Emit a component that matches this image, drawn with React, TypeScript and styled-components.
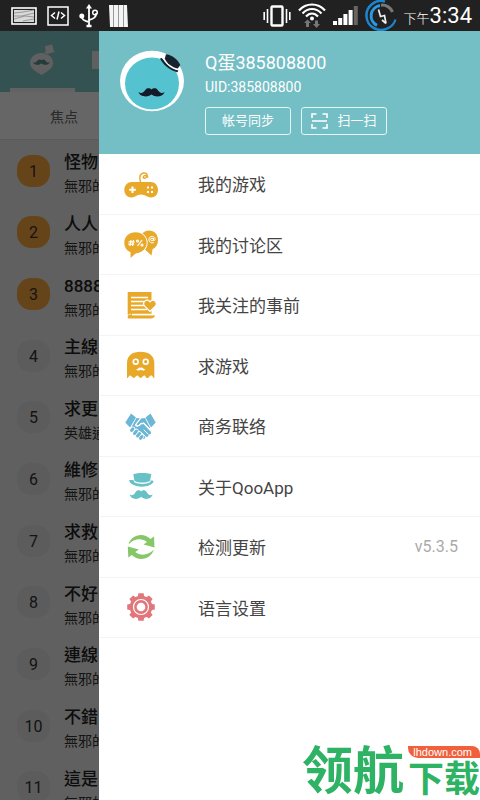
import React from "react";
import styled, { createGlobalStyle } from "styled-components";

const GlobalStyle = createGlobalStyle`
  *, *::before, *::after { box-sizing: border-box; }
  body { margin: 0; background: #fff; }
  button { font: inherit; color: inherit; margin: 0; padding: 0; border: 0; background: none; cursor: pointer; }
  a { color: inherit; text-decoration: none; }
  ul, ol { list-style: none; margin: 0; padding: 0; }
  h1, h2, p { margin: 0; font-weight: 400; }
  svg { display: block; flex: none; }
`;

const Screen = styled.div`
  display: grid;
  grid-template-rows: auto 1fr;
  height: 100vh;
  overflow: hidden;
  font-family: Roboto, "Noto Sans CJK SC", sans-serif;
`;

const StatusBar = styled.header`
  display: flex;
  align-items: center;
  justify-content: space-between;
  height: 31px;
  padding: 0 8px 0 11px;
  background: #212121;
  color: #fff;
`;

const StatusGroup = styled.div<{ $gap: number }>`
  display: flex;
  align-items: center;
  gap: ${(p) => p.$gap}px;
`;

const Clock = styled.time`
  display: flex;
  align-items: baseline;
  padding-top: 4px;
  font-size: 22px;
  line-height: 30px;
`;

const ClockPeriod = styled.span`
  font-size: 13px;
  font-weight: 300;
`;

const Stage = styled.div`
  position: relative;
  min-height: 0;
  overflow: hidden;
`;

const Page = styled.main`
  background: #f0f0f0;
  font-family: Roboto, "Noto Sans CJK TC", sans-serif;
`;

const TabBar = styled.nav`
  display: flex;
  height: 61px;
  padding-left: 10px;
  gap: 16px;
  background: #84cdcf;
`;

const Tab = styled.button<{ $active?: boolean }>`
  display: flex;
  align-items: center;
  justify-content: center;
  width: 65px;
  border-bottom: 4px solid ${(p) => (p.$active ? "#f4f4f4" : "transparent")};
`;

const SubTabs = styled.nav`
  display: flex;
  height: 48px;
  padding-left: 50px;
  border-bottom: 1px solid #e2e2e2;
  background: #fff;
  color: #666;
  font-family: "Noto Sans CJK SC", sans-serif;
  font-size: 14px;
`;

const PostList = styled.ol`
  display: grid;
  grid-auto-rows: 1fr;
  height: 678px;
`;

const Post = styled.li`
  display: flex;
  align-items: center;
  gap: 14px;
  padding-left: 17px;
  overflow: hidden;
  white-space: nowrap;
`;

const Rank = styled.span<{ $top: boolean }>`
  flex: none;
  width: 33px;
  height: 32px;
  border-radius: 14px;
  background: ${(p) => (p.$top ? "#ffab40" : "#e6e6e6")};
  color: #333;
  font-size: 16px;
  line-height: 33px;
  text-align: center;
`;

const PostText = styled.div`
  padding-top: 5px;
`;

const PostTitle = styled.h2`
  color: #222;
  font-size: 17px;
  font-weight: 500;
  line-height: 26px;
`;

const PostAuthor = styled.p`
  color: #333;
  font-size: 14px;
  line-height: 22px;
`;

const Scrim = styled.div`
  position: absolute;
  inset: 0;
  background: rgba(0, 0, 0, 0.6);
`;

const Drawer = styled.aside`
  position: absolute;
  inset: 0 0 0 99px;
  background: #fff;
`;

const Profile = styled.section`
  display: flex;
  gap: 21px;
  height: 123px;
  padding: 19px 20px 0 21px;
  background: #74bec5;
  color: #fff;
`;

const UserName = styled.h1`
  font-size: 18px;
  line-height: 26px;
`;

const UserId = styled.p`
  font-size: 14px;
  line-height: 22px;
`;

const ProfileActions = styled.div`
  display: flex;
  gap: 10px;
  margin-top: 9px;
`;

const OutlineButton = styled.button`
  display: flex;
  align-items: center;
  justify-content: center;
  gap: 9px;
  width: 86px;
  height: 28px;
  border: 1px solid #e4f5f6;
  border-radius: 3px;
  font-size: 13px;
  line-height: 26px;
`;

const Menu = styled.ul`
  display: grid;
  grid-auto-rows: 1fr;
  height: 484px;
`;

const MenuRow = styled.li`
  border-bottom: 1px solid #f4f4f4;
`;

const MenuLink = styled.a`
  display: flex;
  align-items: center;
  height: 100%;
  padding: 0 22px 0 24px;
  color: #444;
  font-size: 17px;
`;

const MenuLabel = styled.span`
  flex: 1;
  margin-left: 39px;
`;

const Version = styled.span`
  color: #aaa;
  font-size: 16px;
`;

const Watermark = styled.div`
  position: absolute;
  right: 0;
  bottom: 0;
  display: flex;
  align-items: flex-start;
  gap: 4px;
  height: 60px;
  color: #2eb263;
  font-family: "Noto Sans CJK SC", sans-serif;
  font-weight: 700;
`;

const MarkLarge = styled.span`
  font-size: 51px;
  line-height: 54px;
`;

const MarkSide = styled.div`
  display: flex;
  flex-direction: column;
  padding-top: 6px;
`;

const MarkTag = styled.span`
  height: 12px;
  padding-right: 8px;
  border-radius: 0 8px 0 10px;
  background: #f0603c;
  color: #fff;
  font-family: "Liberation Sans", sans-serif;
  font-size: 11px;
  font-weight: 400;
  line-height: 12px;
  text-align: right;
`;

const MarkSmall = styled.span`
  font-size: 36px;
  line-height: 36px;
`;

const MUSTACHE =
  "M13 2C11.5 .3 8.5 .2 7 2.2C5.2 4.8 3 6.5 0 4.5C1 9 8.5 10.5 13 7C17.5 10.5 25 9 26 4.5C23 6.5 20.8 4.8 19 2.2C17.5 .2 14.5 .3 13 2Z";

const PictureIcon = () => (
  <svg width="26" height="18" viewBox="0 0 26 18">
    <rect x="1" y="1" width="24" height="16" fill="#212121" stroke="#fff" strokeWidth="1.6" />
    <path d="M3 3H23V15H3Z" fill="#d8d8d8" />
    <path d="M3 6L12 5L23 3M3 9L11 9L23 6M3 12L14 9L23 10M12 14L23 12" stroke="#888" fill="none" strokeWidth=".8" />
  </svg>
);

const CodeIcon = () => (
  <svg width="22" height="20" viewBox="0 0 22 20" fill="none" stroke="#fff">
    <rect x="1" y="1" width="20" height="18" strokeWidth="1.5" />
    <path d="M8 6.5L4.5 9.5L8 12.5M14 6.5L17.5 9.5L14 12.5M12 5.5L10 13.5" strokeWidth="1.5" />
  </svg>
);

const UsbIcon = () => (
  <svg width="20" height="24" viewBox="0 0 20 24" fill="none" stroke="#fff" strokeWidth="1.8">
    <path d="M10 4V22M10 18C5 17 2.5 15.500 2.500 12M10 16C14.500 15 17.500 12.500 17 9" />
    <path d="M10 0L13 4.500H7Z" fill="#fff" stroke="none" />
    <circle cx="2.800" cy="12" r="2.500" fill="#fff" stroke="none" />
    <circle cx="16" cy="8.500" r="2.300" strokeWidth="1.500" />
    <path d="M7.500 22H12.500" strokeWidth="2.500" />
  </svg>
);

const BarsIcon = () => (
  <svg width="19" height="22" viewBox="0 0 19 22">
    <path d="M0 0H18L19 22H1Z" fill="#f5f5f5" />
    <path d="M4.500 0V22M9.500 0V22M14.500 0V22" stroke="#999" strokeWidth="1" />
  </svg>
);

const VibrateIcon = () => (
  <svg width="28" height="22" viewBox="0 0 28 22" fill="none" stroke="#fff">
    <rect x="8.500" y="1.500" width="11" height="19" rx="1" strokeWidth="2.400" />
    <path d="M4.500 4V18M23.500 4V18M1.200 7V15M26.800 7V15" strokeWidth="1.600" />
  </svg>
);

const WifiIcon = () => (
  <svg width="28" height="26" viewBox="0 0 28 26" fill="none">
    <path d="M1 7.500C8 -.5 20 -.5 27 7.500M4.500 10.500C10 4.500 18 4.500 23.500 10.500M8 13.500C11.500 9.500 16.500 9.500 20 13.500" stroke="#fff" strokeWidth="2.200" />
    <circle cx="14" cy="15.500" r="2" fill="#fff" />
    <path d="M9.500 16.500L13 20H11V24H8V20H6ZM18.500 25L22 21H20V17.500H17V21H15Z" fill="#777" />
  </svg>
);

const SignalIcon = () => (
  <svg width="25" height="19" viewBox="0 0 25 19" fill="#fff">
    <path d="M0 15H4V19H0ZM5.200 12H9.200V19H5.200ZM10.400 8H14.400V19H10.400ZM15.600 4H19.600V19H15.600Z" />
    <path d="M20.800 0H24.800V19H20.800Z" fill="#666" />
  </svg>
);

const BatteryRing = () => (
  <svg width="32" height="31" viewBox="0 0 32 31" fill="none">
    <path d="M20 1.500A14.500 14.500 0 1 0 22 28.600" stroke="#1b86cf" strokeWidth="2.500" />
    <path d="M15 5.500A10.500 10.500 0 0 0 12 25.300" stroke="#2a9ae0" strokeWidth="3" />
    <path d="M16 5.200A11 11 0 0 1 27.500 12" stroke="#777" strokeWidth="3" />
    <path d="M22 28.600A14 14 0 0 0 30.500 19.500" stroke="#1b86cf" strokeWidth="2.200" />
    <path d="M13.500 9.500L15.500 16.500L19.500 15.500L21 23.500M21 23.500L17 20" stroke="#eee" strokeWidth="1.700" />
  </svg>
);

const PinIcon = () => (
  <svg width="26" height="32" viewBox="0 0 26 32">
    <path d="M11.500 9C5 9 0 13.500 0 19C0 24 5 27 11.500 31C18 27 23 24 23 19C23 13.500 18 9 11.500 9Z" fill="#f0f0f0" />
    <path d="M14.500 2L22.500 0L24 6.500L25.500 8L17 10.500L13.500 8.500L15.500 7.500Z" fill="#f0f0f0" stroke="#84cdcf" strokeWidth=".7" />
    <path d={MUSTACHE} transform="translate(3 15) scale(.65)" fill="#5b9497" />
  </svg>
);

const CardIcon = () => (
  <svg width="65" height="18" viewBox="0 0 65 18">
    <path d="M1 0H24V18H1Z" fill="#f0f0f0" />
  </svg>
);

const Avatar = () => (
  <svg width="64" height="62" viewBox="0 0 64 62" role="img" aria-label="头像">
    <ellipse cx="32" cy="31" rx="32" ry="30.300" fill="#fff" />
    <ellipse cx="32" cy="33.500" rx="27" ry="26" fill="#55c3cf" />
    <path d="M40 8.500C43 14.500 49 20 57.500 22.300L58.300 20.500C51 18 45.500 13.500 41.800 8Z" fill="#18222f" />
    <path d="M44.500 10C47.500 14.500 52 18 57.500 19.500" stroke="#fff" strokeWidth="1.500" fill="none" />
    <path d="M46 4.300C51 4.500 57.500 9 60.300 15L57.800 18.500C52 17.500 46.500 13 44.800 8.500Z" fill="#18222f" />
    <path d={MUSTACHE} transform="translate(18.500 37.500)" fill="#141a28" />
  </svg>
);

const ScanIcon = () => (
  <svg width="17" height="16" viewBox="0 0 17 16" fill="none" stroke="#fff" strokeWidth="1.600">
    <path d="M1 5V1H5.500M11.500 1H16V5M16 11V15H11.500M5.500 15H1V11M1 8H16" />
  </svg>
);

const IconFrame = ({ children }: { children: React.ReactNode }) => (
  <svg width="36" height="32" viewBox="0 0 36 32" aria-hidden="true">
    {children}
  </svg>
);

const AMBER = "#e8a92a";

const GamepadIcon = () => (
  <IconFrame>
    <path d="M9 14H27.500C32 14 35 17.500 35 22C35 26.500 32 29.500 28 29.500C24 29.500 22.500 26.500 18 26.500C13.500 26.500 12.500 29.500 8.500 29.500C4.500 29.500 1.300 26.500 1.300 22C1.300 17.500 4.500 14 9 14Z" fill={AMBER} />
    <path d="M17.500 14C16 9 17 5.500 20.500 5C24 4.500 25.500 7.500 23 9.500C20.500 11.500 19.500 9 21 8C22.500 7 24.500 8 25 9.500" fill="none" stroke={AMBER} strokeWidth="1.500" />
    <path d="M9.500 18.500V25M6.200 21.700H12.800" stroke="#fff" strokeWidth="2" />
    <path d="M24 18.500H26V20.500H24ZM28 18.500H30V20.500H28ZM24 23H26V25H24ZM28 23H30V25H28Z" fill="#fff" />
  </IconFrame>
);

const ChatIcon = () => (
  <IconFrame>
    <path d="M26 2.500C31.500 2.500 35 6.500 35 12C35 16.500 33 19.500 29.500 21.200L28.500 27.500L23 22.500C19 20 17 16 17 12C17 6.500 21 2.500 26 2.500Z" fill={AMBER} />
    <path d="M12.500 4.300C19 4.300 23.700 8.800 23.700 14.700C23.700 20.500 19 25 13 25.200L7.500 30V24.200C3.700 22.500 1.300 19 1.300 14.700C1.300 8.800 6 4.300 12.500 4.300Z" fill={AMBER} stroke="#fff" strokeWidth="1.800" paintOrder="stroke" />
    <g fill="none" stroke="#fff">
      <path d="M8 12L7 18M10.500 12L9.500 18M5.500 13.900H11.500M5.200 16.200H11.200M19 12L14.500 18" strokeWidth="1.200" />
      <circle cx="14.500" cy="13" r="1" strokeWidth="1.100" />
      <circle cx="19" cy="17" r="1" strokeWidth="1.100" />
      <circle cx="29" cy="11.500" r="1.300" strokeWidth="1" />
      <path d="M30.500 10V12.500C32 13 32.300 11.500 32 10.500C31 7.500 26.500 7.800 26 11C25.600 14.500 28.500 15.500 31 14.500" strokeWidth="1" />
    </g>
  </IconFrame>
);

const ScrollIcon = () => (
  <IconFrame>
    <path d="M4.700 3H28.500V26H8.500L7.500 24.500L4.700 26Z" fill={AMBER} />
    <path d="M5 29.300C3.800 26.500 7 24.500 8.800 26.300H32C31.500 28.500 30 29.500 28 29.500H5Z" fill={AMBER} />
    <path d="M8 8.500H25M8 12.500H21M8 16.500H21M8 20.500H24M9 25.500H31" stroke="#fff" strokeWidth="1.500" />
    <path d="M27 22.500L21.700 17.200C18.500 13 24 8.800 27 12.800C30 8.800 35.500 13 32.300 17.200Z" fill={AMBER} stroke="#fff" strokeWidth="1.200" />
  </IconFrame>
);

const GhostIcon = () => (
  <IconFrame>
    <path d="M4 29V14C4 6.500 9.500 2.700 17.500 2.700S31.300 6.500 31.300 14V29C29.500 29 30 26.500 28.200 26.500S26.500 29 24.300 29S23 26.500 21.200 26.500S19.500 29 17.600 29S15.900 26.500 14.200 26.500S12.500 29 10.700 29S9 26.500 7.200 26.500S6 29 4 29Z" fill={AMBER} />
    <g fill="#fff">
      <circle cx="12.700" cy="12.700" r="3.200" />
      <circle cx="22.700" cy="12.700" r="3.200" />
      <path d={MUSTACHE} transform="translate(13.200 18.300) scale(.35)" />
    </g>
    <circle cx="12.700" cy="12.700" r="1.600" fill={AMBER} />
    <circle cx="22.700" cy="12.700" r="1.600" fill={AMBER} />
  </IconFrame>
);

const HandshakeIcon = () => (
  <IconFrame>
    <g fill="#6cb6d6">
      <path d="M8 3.500L13 7.500L7 17.500L2.300 12.500Z" />
      <path d="M27.500 3.500L22.500 7.500L28 17.500L32.700 12.500Z" />
      <path d="M13.500 8L17 8.500L12 14.500C12 17.500 15.500 17.500 18 14.500L20.500 14L28 22C28.500 24 27 25 25.500 24.300C26 26.500 24 27.500 22.500 26.500C22.300 28.500 20.500 29.500 19 28.500L8 18Z" />
      <path d="M18 8.500L22 8L27 17.500L26.500 18.500L21 12.800L17.500 13.200C16 15.500 13.800 15.800 13.500 14.500Z" />
    </g>
    <g fill="none" strokeLinecap="round">
      <path d="M8.500 20.500L10 18.800M11.500 23.500L13.500 21M14.500 26L16.500 23.500M17.500 28.500L19 26.500" stroke="#fff" strokeWidth="4.500" />
      <path d="M8.500 20.500L10 18.800M11.500 23.500L13.500 21M14.500 26L16.500 23.500M17.500 28.300L19 26.500" stroke="#6cb6d6" strokeWidth="3" />
      <path d="M21 20L25 24M18.500 22.500L22.500 26.500" stroke="#fff" strokeWidth="1" />
      <path d="M17.500 8.500L12.700 14.500C13 16.500 15.500 16.500 17.500 13.500L21 13L27 19" stroke="#fff" strokeWidth="1" />
    </g>
  </IconFrame>
);

const HatIcon = () => (
  <IconFrame>
    <g fill="#67c1c6">
      <path d="M10.300 4C15 2.500 24 2.500 28.300 4L27 11C22 13 16 13 11.500 11Z" />
      <path d="M6 10.500C7.500 9.800 9.500 10 10.800 10.500L11.200 12.200C16 14.500 23 14.500 27.200 12.200L27.700 10.500C29.500 10.300 30.500 10.500 30.500 11.500C28 18.500 8.500 18.500 6 10.500Z" />
      <path d={MUSTACHE} transform="translate(6.700 19.500) scale(.88 1.050)" />
    </g>
  </IconFrame>
);

const RefreshIcon = () => (
  <IconFrame>
    <g fill="#86c768">
      <path d="M5.500 13.500C8 4 20 .8 27.500 8L31 5.500L31.500 16.500L20.500 13.500L24 11C18.500 6.500 10.500 8 5.500 13.500Z" />
      <path d="M30.800 18.500C28.300 28 16.300 31.200 8.800 24L5.300 26.500L4.800 15.500L15.800 18.500L12.300 21C17.800 25.500 25.800 24 30.800 18.500Z" />
    </g>
  </IconFrame>
);

const TEETH = [0, 45, 90, 135, 180, 225, 270, 315];

const GearIcon = () => (
  <IconFrame>
    <g transform="translate(18 16)" fill="#e2777b">
      {TEETH.map((angle) => (
        <path key={angle} d="M-3.500 -9L-2.600 -13.800H2.600L3.500 -9Z" transform={`rotate(${angle})`} />
      ))}
      <circle r="11.300" />
      <circle r="7.500" fill="#e2777b" stroke="#fff" strokeWidth="1.200" />
      <circle r="4.300" fill="#fff" />
    </g>
  </IconFrame>
);

const posts = [
  ["怪物", "無邪的"],
  ["人人", "無邪的"],
  ["8888", "無邪的"],
  ["主線", "無邪的"],
  ["求更", "英雄通"],
  ["維修", "無邪的"],
  ["求救", "無邪的"],
  ["不好", "無邪的"],
  ["連線", "無邪的"],
  ["不錯", "無邪的"],
  ["這是", "無邪的"],
];

const menu = [
  { label: "我的游戏", Icon: GamepadIcon },
  { label: "我的讨论区", Icon: ChatIcon },
  { label: "我关注的事前", Icon: ScrollIcon },
  { label: "求游戏", Icon: GhostIcon },
  { label: "商务联络", Icon: HandshakeIcon },
  { label: "关于QooApp", Icon: HatIcon },
  { label: "检测更新", Icon: RefreshIcon, note: "v5.3.5" },
  { label: "语言设置", Icon: GearIcon },
];

export default function App() {
  return (
    <Screen>
      <GlobalStyle />
      <StatusBar>
        <StatusGroup $gap={10}>
          <PictureIcon />
          <CodeIcon />
          <UsbIcon />
          <BarsIcon />
        </StatusGroup>
        <StatusGroup $gap={7}>
          <VibrateIcon />
          <WifiIcon />
          <SignalIcon />
          <BatteryRing />
          <Clock>
            <ClockPeriod>下午</ClockPeriod>3:34
          </Clock>
        </StatusGroup>
      </StatusBar>
      <Stage>
        <Page>
          <TabBar>
            <Tab $active aria-label="首页">
              <PinIcon />
            </Tab>
            <Tab aria-label="卡片">
              <CardIcon />
            </Tab>
          </TabBar>
          <SubTabs>
            <button>焦点</button>
          </SubTabs>
          <PostList>
            {posts.map(([title, author], i) => (
              <Post key={title}>
                <Rank $top={i < 3}>{i + 1}</Rank>
                <PostText>
                  <PostTitle>{title}</PostTitle>
                  <PostAuthor>{author}</PostAuthor>
                </PostText>
              </Post>
            ))}
          </PostList>
        </Page>
        <Scrim />
        <Drawer>
          <Profile>
            <Avatar />
            <div>
              <UserName>Q蛋385808800</UserName>
              <UserId>UID:385808800</UserId>
              <ProfileActions>
                <OutlineButton>帐号同步</OutlineButton>
                <OutlineButton>
                  <ScanIcon />
                  扫一扫
                </OutlineButton>
              </ProfileActions>
            </div>
          </Profile>
          <nav>
            <Menu>
              {menu.map(({ label, Icon, note }) => (
                <MenuRow key={label}>
                  <MenuLink href="#">
                    <Icon />
                    <MenuLabel>{label}</MenuLabel>
                    {note && <Version>{note}</Version>}
                  </MenuLink>
                </MenuRow>
              ))}
            </Menu>
          </nav>
        </Drawer>
        <Watermark>
          <MarkLarge>领航</MarkLarge>
          <MarkSide>
            <MarkTag>lhdown.com</MarkTag>
            <MarkSmall>下载</MarkSmall>
          </MarkSide>
        </Watermark>
      </Stage>
    </Screen>
  );
}
